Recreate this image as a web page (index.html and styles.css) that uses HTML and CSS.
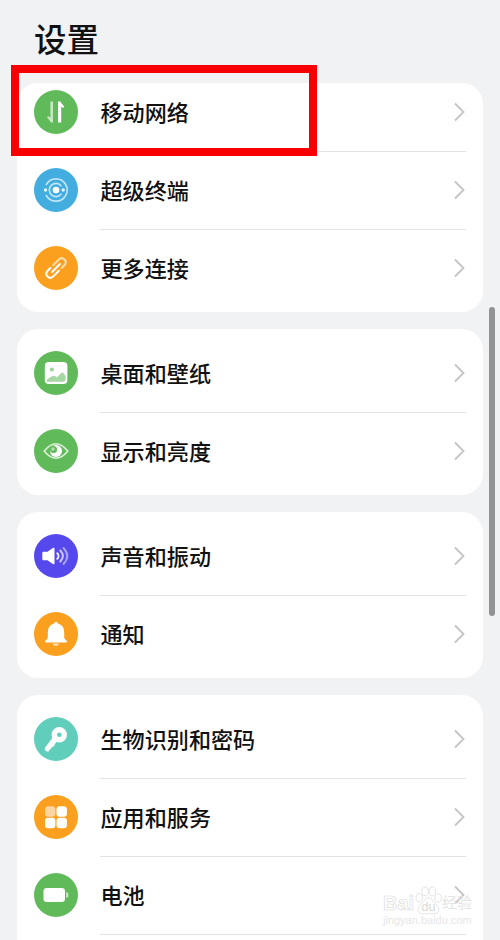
FILE: index.html
```
<!DOCTYPE html>
<html lang="zh-CN">

<head>
    <meta charset="UTF-8">
    <title>设置</title>
    <link rel="stylesheet" href="styles.css">
</head>

<body>
    <h1 class="page-title">设置</h1>
    <ul class="card card-first">
        <li class="item">
            <svg class="icon" viewBox="0 0 44 44">
                <circle cx="22" cy="22" r="22" fill="#60ba5a"/>
                <path d="M19 11.5v21h-1.900l-4.100-5.200 1.200-1.200 2.200 1.700V11.5z" fill="#c6e7c2"/>
                <path d="M24 32.5v-21h2.200l4.100 5.200-1.200 1.200-1.900-1.400v16z" fill="#fff"/>
            </svg>
            <span class="name">移动网络</span>
            <svg class="arrow" viewBox="0 0 12 20"><path d="M2 1.5l8.5 8.5L2 18.5"/></svg>
        </li>
        <li class="item">
            <svg class="icon" viewBox="0 0 44 44">
                <circle cx="22" cy="22" r="22" fill="#43ade0"/>
                <circle cx="22" cy="22" r="3.3" fill="#fff"/>
                <g fill="none" stroke="#c2e6f7" stroke-width="1.6" stroke-linecap="round">
                    <path d="M27 17.8a6.6 6.6 0 1 0 0 8.4"/>
                    <path d="M12.3 16.5a11.2 11.2 0 0 1 19.4 0M12.3 27.5a11.2 11.2 0 0 0 19.4 0M31.7 16.5a11.2 11.2 0 0 1 0 11"/>
                </g>
                <circle cx="11.5" cy="22" r="1.7" fill="#e7f6fd"/>
                <circle cx="29.2" cy="22" r="1.7" fill="#e7f6fd"/>
            </svg>
            <span class="name">超级终端</span>
            <svg class="arrow" viewBox="0 0 12 20"><path d="M2 1.5l8.5 8.5L2 18.5"/></svg>
        </li>
        <li class="item">
            <svg class="icon" viewBox="0 0 44 44">
                <circle cx="22" cy="22" r="22" fill="#fa9f1e"/>
                <g fill="none" stroke-width="2.1" stroke-linecap="round" transform="rotate(-45 22 22)">
                    <path d="M22 18h7.500q4.500 0 4.500 4t-4.500 4h-3.500" stroke="#fddcae"/>
                    <path d="M18 18h-3.500q-4.500 0-4.500 4t4.500 4h7.500" stroke="#fff"/>
                    <path d="M16.5 22h11" stroke="#fff"/>
                </g>
            </svg>
            <span class="name">更多连接</span>
            <svg class="arrow" viewBox="0 0 12 20"><path d="M2 1.5l8.5 8.5L2 18.5"/></svg>
        </li>
    </ul>
    <ul class="card">
        <li class="item">
            <svg class="icon" viewBox="0 0 44 44">
                <circle cx="22" cy="22" r="22" fill="#60ba5a"/>
                <rect x="10.8" y="11" width="22.6" height="22" rx="4" fill="#fff"/>
                <circle cx="17.8" cy="18.5" r="2.1" fill="#9fd49b"/>
                <path d="M13 30.8v-2.2l5-3.4q2-1 3.8.4l1.2.6 4-4q1.6-1.3 2.8.2l1.8 3.1v3q0 2.3-2.3 2.3z" fill="#a7d8a3"/>
            </svg>
            <span class="name">桌面和壁纸</span>
            <svg class="arrow" viewBox="0 0 12 20"><path d="M2 1.5l8.5 8.5L2 18.5"/></svg>
        </li>
        <li class="item">
            <svg class="icon" viewBox="0 0 44 44">
                <circle cx="22" cy="22" r="22" fill="#60ba5a"/>
                <path d="M10.2 22Q22 7.5 33.8 22Q22 36.5 10.2 22z" fill="none" stroke="#d9f0d6" stroke-width="1.7" stroke-linejoin="round"/>
                <circle cx="22" cy="22" r="6" fill="#fff"/>
                <circle cx="19.5" cy="20.5" r="3.5" fill="#60ba5a"/>
                <circle cx="19" cy="20" r="1.7" fill="#b5dfb1"/>
            </svg>
            <span class="name">显示和亮度</span>
            <svg class="arrow" viewBox="0 0 12 20"><path d="M2 1.5l8.5 8.5L2 18.5"/></svg>
        </li>
    </ul>
    <ul class="card">
        <li class="item">
            <svg class="icon" viewBox="0 0 44 44">
                <circle cx="22" cy="22" r="22" fill="#5549ee"/>
                <path d="M9.5 17.7h4l5.300-3.700q1.700-.8 1.700 1v14q0 1.800-1.700 1l-5.300-3.700h-4q-1.200 0-1.200-1.200v-6.200q0-1.200 1.200-1.200z" fill="#fff"/>
                <g fill="none" stroke-width="2" stroke-linecap="round">
                    <path d="M23.3 19.2a4 4 0 0 1 0 5.600" stroke="#eeecff"/>
                    <path d="M26.3 16.5q5.200 5.500 0 11" stroke="#cbc7fa"/>
                    <path d="M29.5 14q7.500 8 0 16" stroke="#a9a2f7"/>
                </g>
            </svg>
            <span class="name">声音和振动</span>
            <svg class="arrow" viewBox="0 0 12 20"><path d="M2 1.5l8.5 8.5L2 18.5"/></svg>
        </li>
        <li class="item">
            <svg class="icon" viewBox="0 0 44 44">
                <circle cx="22" cy="22" r="22" fill="#fa9f1e"/>
                <path d="M18.5 31.5H25q-.8 2.6-3.200 2.600t-3.300-2.600z" fill="#fde0b5"/>
                <path d="M22 9.7q1.600 0 1.900 1.700 6.300 1.800 6.300 8.800v5.300q.2 1.700 2.700 3.600.8 1.400-.8 1.500H11.900q-1.600-.1-.8-1.500 2.500-1.900 2.700-3.600v-5.300q0-7 6.300-8.800.3-1.700 1.900-1.700z" fill="#fff"/>
            </svg>
            <span class="name">通知</span>
            <svg class="arrow" viewBox="0 0 12 20"><path d="M2 1.5l8.5 8.5L2 18.5"/></svg>
        </li>
    </ul>
    <ul class="card card-last">
        <li class="item">
            <svg class="icon" viewBox="0 0 44 44">
                <circle cx="22" cy="22" r="22" fill="#60cebb"/>
                <circle cx="25.3" cy="17.8" r="5" fill="none" stroke="#fff" stroke-width="5.4"/>
                <path d="M19 20l4.500 4-2.800 3.200q-.2 2.600-3 2.800-.2 2.200-2 2.600l-.8 1.600q-2 1-3.600-.8-1.200-1.200-.3-2.600z" fill="#fff"/>
            </svg>
            <span class="name">生物识别和密码</span>
            <svg class="arrow" viewBox="0 0 12 20"><path d="M2 1.5l8.5 8.5L2 18.5"/></svg>
        </li>
        <li class="item">
            <svg class="icon" viewBox="0 0 44 44">
                <circle cx="22" cy="22" r="22" fill="#fa9f1e"/>
                <rect x="11" y="11.3" width="10.4" height="10.4" rx="3" fill="#fdd5a0"/>
                <g fill="#fff">
                    <rect x="22.5" y="11.3" width="10.4" height="10.4" rx="3"/>
                    <rect x="11" y="22.8" width="10.4" height="10.4" rx="3"/>
                    <rect x="22.5" y="22.8" width="10.4" height="10.4" rx="3"/>
                </g>
            </svg>
            <span class="name">应用和服务</span>
            <svg class="arrow" viewBox="0 0 12 20"><path d="M2 1.5l8.5 8.5L2 18.5"/></svg>
        </li>
        <li class="item">
            <svg class="icon" viewBox="0 0 44 44">
                <circle cx="22" cy="22" r="22" fill="#60ba5a"/>
                <rect x="9.5" y="15" width="21.5" height="14" rx="3.2" fill="#fff"/>
                <path d="M32 19.2h.8q1.600 0 1.600 1.600v2.400q0 1.600-1.600 1.600H32z" fill="#bfe3bc"/>
            </svg>
            <span class="name">电池</span>
            <svg class="arrow" viewBox="0 0 12 20"><path d="M2 1.5l8.5 8.5L2 18.5"/></svg>
        </li>
    </ul>
    <div class="scrollbar"></div>
    <div class="highlight"></div>
    <div class="watermark">
        <div class="logo">
            <span class="bai">Bai</span>
            <svg class="paw" viewBox="0 0 28 30">
                <ellipse cx="4.5" cy="12" rx="3.3" ry="4.3"/>
                <ellipse cx="10.5" cy="5.5" rx="3.3" ry="4.6"/>
                <ellipse cx="18" cy="5.5" rx="3.3" ry="4.6"/>
                <ellipse cx="24" cy="12.5" rx="3.3" ry="4.3"/>
                <path d="M14 12q3 0 5 4l4.5 4.500q3 4-.5 7.500-2 1.600-9 .5-7 1.100-9-.5-3.500-3.500-.5-7.500L9 16q2-4 5-4z"/>
                <text x="14" y="26" text-anchor="middle">du</text>
            </svg>
            <span class="jy">经验</span>
        </div>
        <div class="site">jingyan.baidu.com</div>
    </div>
</body>

</html>
```
FILE: styles.css
```
body,
h1,
ul,
li {
    padding: 0;
    margin: 0;
}

li {
    list-style: none;
}

body {
    position: relative;
    box-sizing: border-box;
    height: 940px;
    padding: 0 17px;
    overflow: hidden;
    background: #f1f2f4;
    color: #111;
    font-family: "Noto Sans CJK SC", sans-serif;
}

.page-title {
    height: 83px;
    padding-left: 17px;
    box-sizing: border-box;
    font-size: 32.5px;
    font-weight: 500;
    line-height: 76px;
}

.card {
    margin-bottom: 17px;
    padding: 5px 17px;
    background: #fff;
    border-radius: 21px;
}

.card-first {
    padding-top: 0;
}

/* 最后一组延伸到屏幕底部 */
.card-last {
    box-sizing: border-box;
    height: 245px;
    margin-bottom: 0;
    border-radius: 21px 21px 0 0;
}

.item {
    position: relative;
    display: flex;
    align-items: center;
    box-sizing: border-box;
    height: 78px;
}

/* 第一行上方被标题栏遮住一部分 */
.card-first .item:first-child {
    height: 68px;
    padding-bottom: 10px;
}

.item::after {
    content: "";
    position: absolute;
    right: 0;
    bottom: -1px;
    left: 66px;
    height: 1px;
    background: #e3e3e3;
}

.card:not(.card-last) .item:last-child::after {
    display: none;
}

.icon {
    flex: none;
    width: 44px;
    height: 44px;
}

.name {
    flex: 1;
    margin-left: 22.5px;
    padding-bottom: 3px;
    font-size: 22.1px;
    font-weight: 500;
    line-height: 32px;
}

.arrow {
    width: 12px;
    height: 20px;
    margin-right: 1px;
    fill: none;
    stroke: #c4c4c6;
    stroke-width: 1.8;
}

.scrollbar {
    position: absolute;
    top: 307px;
    right: 5px;
    width: 6px;
    height: 309px;
    border-radius: 3px;
    background: #929395;
}

.highlight {
    position: absolute;
    top: 65px;
    left: 11px;
    box-sizing: border-box;
    width: 306px;
    height: 91px;
    border: 8px solid #f90000;
}

.watermark {
    position: absolute;
    top: 885px;
    left: 383px;
    width: 92px;
    color: #fff;
    font-family: "Liberation Sans", "Noto Sans CJK SC", sans-serif;
}

.logo {
    display: flex;
    align-items: flex-end;
    height: 30px;
    font-size: 20px;
    font-weight: bold;
    line-height: 24px;
    -webkit-text-stroke: 0.6px #d8d8d8;
}

.bai {
    width: 32px;
}

.paw {
    width: 27px;
    height: 29px;
    fill: none;
    stroke: #dcdcdc;
    stroke-width: 0.8;
}

.paw text {
    fill: #d8d8d8;
    stroke: none;
    font-size: 13px;
    font-weight: normal;
    -webkit-text-stroke: 0;
}

.jy {
    color: #e4e4e4;
    font-size: 15px;
    font-weight: normal;
    -webkit-text-stroke: 0;
}

.site {
    margin-top: 1px;
    color: #e6e6e6;
    font-size: 11px;
    line-height: 9px;
}
```
